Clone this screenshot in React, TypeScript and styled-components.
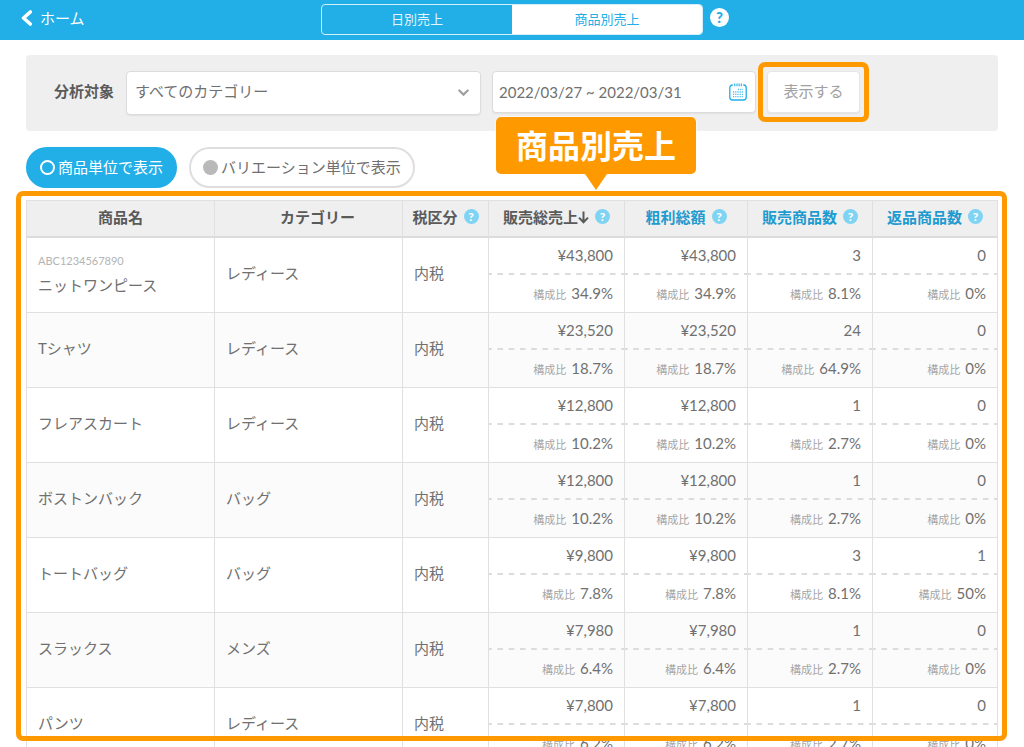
import React from "react";
import styled, { createGlobalStyle, css } from "styled-components";

const blue = "#22aee6";
const linkBlue = "#1f9bd0";
const orange = "#ff9900";
const line = "#e0e0e0";

const GlobalStyle = createGlobalStyle`
  *, *::before, *::after { box-sizing: border-box; }
  body {
    margin: 0;
    background: #fff;
    color: #707070;
    font-family: Lato, "Noto Sans CJK JP", sans-serif;
    font-size: 15px;
    line-height: 20px;
  }
  button, input, select { font: inherit; color: inherit; margin: 0; }
  button { cursor: pointer; }
`;

const Page = styled.div`
  display: flex;
  flex-direction: column;
  height: 100vh;
  overflow: hidden;
`;

const TopBar = styled.header`
  display: grid;
  grid-template-columns: 1fr minmax(0, 382px) 1fr;
  flex: none;
  height: 40px;
  padding: 4px 20px 0;
  background: ${blue};
`;

const BackLink = styled.a`
  display: flex;
  align-items: center;
  justify-self: start;
  gap: 8px;
  height: 28px;
  color: #fff;
  text-decoration: none;
`;

const Tabs = styled.nav`
  display: flex;
  height: 31px;
  border: 1px solid #d3effa;
  border-radius: 4px;
  overflow: hidden;
`;

const Tab = styled.button<{ $active?: boolean }>`
  flex: 1;
  padding: 0 0 2px;
  border: 0;
  font-size: 13px;
  background: ${(p) => (p.$active ? "#fff" : "transparent")};
  color: ${(p) => (p.$active ? blue : "#e4f5fc")};
`;

const Help = styled.button<{ $large?: boolean }>`
  display: inline-flex;
  flex: none;
  align-items: center;
  justify-content: center;
  width: 15px;
  height: 15px;
  padding: 0;
  border: 0;
  border-radius: 50%;
  background: #7fd3f3;
  color: #fff;
  font-size: 12px;
  font-weight: 900;
  line-height: 15px;
  ${(p) =>
    p.$large &&
    css`
      width: 19px;
      height: 19px;
      margin: 4px 0 0 7px;
      background: #fff;
      color: ${blue};
      font-size: 15px;
      line-height: 19px;
    `}
`;

const FilterPanel = styled.form`
  display: flex;
  flex: none;
  align-items: flex-start;
  height: 76px;
  margin: 15px 26px 0;
  padding: 16px 28px;
  border-radius: 4px;
  background: #efefef;
`;

const FilterLabel = styled.label`
  flex: none;
  width: 72px;
  line-height: 40px;
  font-weight: 700;
  color: #5a5a5a;
`;

const SelectBox = styled.div`
  display: grid;
  flex: 0 1 355px;
  align-items: center;
  > * { grid-area: 1 / 1; }
  > svg { justify-self: end; margin-right: 12px; pointer-events: none; }
`;

const field = css`
  border: 1px solid #dcdcdc;
  border-radius: 4px;
  background: #fff;
  box-shadow: 0 1px 1px #e2e2e2;
`;

const Select = styled.select`
  ${field}
  width: 100%;
  height: 44px;
  padding: 0 32px 4px 8px;
  appearance: none;
`;

const DateBox = styled.div`
  ${field}
  display: flex;
  flex: 0 1 264px;
  align-items: center;
  height: 42px;
  margin-left: 11px;
  padding: 0 8px 0 6px;
`;

const DateInput = styled.input`
  flex: 1;
  min-width: 0;
  padding: 0;
  border: 0;
  background: transparent;
  outline: 0;
`;

const Highlight = styled.div`
  position: relative;
  margin-left: 11px;
  &::after {
    content: "";
    position: absolute;
    inset: -9px;
    border: 5px solid ${orange};
    border-radius: 7px;
    pointer-events: none;
  }
`;

const ShowButton = styled.button`
  ${field}
  width: 93px;
  height: 42px;
  padding: 0 0 2px;
  border-color: #e6e6e6;
  color: #a0a0a0;
`;

const UnitSwitch = styled.div`
  display: flex;
  flex: none;
  gap: 12px;
  height: 41px;
  margin: 16px 26px 0;
`;

const Pill = styled.label<{ $active?: boolean }>`
  display: flex;
  align-items: center;
  gap: 3px;
  padding: 0 12px 2px;
  border: 2px solid ${(p) => (p.$active ? blue : "#dedede")};
  border-radius: 21px;
  background: ${(p) => (p.$active ? blue : "#fff")};
  color: ${(p) => (p.$active ? "#fff" : "#707070")};
`;

const Radio = styled.input`
  width: 15px;
  height: 15px;
  margin: 2px 0 0;
  appearance: none;
  border-radius: 50%;
  background: #b9b9b9;
  &:checked {
    border: 2px solid #fff;
    background: transparent;
  }
`;

const Report = styled.main`
  position: relative;
  flex: 1;
  min-height: 0;
  margin-top: 3px;
`;

const Outline = styled.div`
  position: absolute;
  inset: 0 17px 6px 16px;
  border: 5px solid ${orange};
  border-radius: 7px;
  pointer-events: none;
`;

const Callout = styled.div`
  position: absolute;
  bottom: calc(100% + 17px);
  left: 496px;
  width: 200px;
  border-radius: 5px;
  background: ${orange};
  box-shadow: 0 0 0 1px #fff8;
  color: #fff;
  font-size: 32px;
  font-weight: 700;
  line-height: 57px;
  text-align: center;
  &::after {
    content: "";
    position: absolute;
    top: 100%;
    left: 50%;
    margin-left: -11px;
    border: 11px solid transparent;
    border-top: 16px solid ${orange};
    border-bottom: 0;
  }
`;

const TableClip = styled.div`
  height: 100%;
  padding: 9px 26px 0;
  overflow: hidden;
`;

const Table = styled.table`
  width: 100%;
  table-layout: fixed;
  border-spacing: 0;
  border: solid ${line};
  border-width: 1px 0 0 1px;
`;

const Th = styled.th<{ $link?: boolean; $indent?: boolean }>`
  height: 37px;
  padding: 0 0 4px ${(p) => (p.$indent ? "18px" : "0")};
  border-right: 1px solid ${line};
  border-bottom: 2px solid #dcdcdc;
  background: #efefef;
  color: ${(p) => (p.$link ? linkBlue : "#5a5a5a")};
  font-weight: 700;
`;

const HeadContent = styled.div`
  display: flex;
  align-items: center;
  justify-content: center;
  gap: 6px;
`;

const SortButton = styled.button`
  display: flex;
  align-items: center;
  padding: 0;
  border: 0;
  background: none;
  font-weight: 700;
`;

const Row = styled.tr`
  height: 75px;
  &:nth-child(even) { background: #fbfbfb; }
`;

const Td = styled.td`
  padding: 0 11px 4px;
  border-right: 1px solid ${line};
  border-bottom: 1px solid ${line};
`;

const Code = styled.div`
  margin-bottom: 4px;
  color: #b4b4b4;
  font-size: 11px;
`;

const MetricCell = styled(Td)`
  padding: 0;
  text-align: right;
`;

const Metric = styled.div`
  height: 37px;
  padding: 0 11px;
  line-height: 36px;
  white-space: nowrap;
`;

const Divided = styled(Metric)`
  line-height: 34px;
  background: linear-gradient(90deg, #dcdcdc 3px, transparent 3px 8px, #dcdcdc 8px) 0 100% / 11px 2px;
  background-repeat: round no-repeat;
`;

const Ratio = styled.small`
  margin-right: 5px;
  color: #a6a6a6;
  font-size: 11px;
`;

const BackIcon = () => (
  <svg width="12" height="16" viewBox="0 0 12 16" fill="none" stroke="#fff" strokeWidth="3.6" aria-hidden="true">
    <path d="M10.3 2 3.5 8l6.8 6" strokeLinejoin="round" strokeLinecap="round" />
  </svg>
);

const ChevronIcon = () => (
  <svg width="11" height="8" viewBox="0 0 11 8" fill="none" stroke="#a0a0a0" strokeWidth="2.2" aria-hidden="true">
    <path d="M1.3 1.5 5.5 5.6l4.2-4.1" strokeLinecap="round" />
  </svg>
);

const SortArrow = () => (
  <svg width="11" height="15" viewBox="0 0 11 15" fill="none" stroke="#5a5a5a" strokeWidth="2" aria-hidden="true">
    <path d="M5.5 2.5v10.5M1 8.6l4.5 4.6L10 8.6" />
  </svg>
);

const CalendarIcon = () => (
  <svg width="18" height="18" viewBox="0 0 18 18" fill="none" stroke={blue} aria-hidden="true">
    <path
      d="M3.8 2H3.5A2.7 2.7 0 0 0 .8 4.7v9.6A2.7 2.7 0 0 0 3.5 17h11a2.7 2.7 0 0 0 2.7-2.7V4.7A2.7 2.7 0 0 0 14.5 2h-.3"
      strokeWidth="1.3"
    />
    <path d="M5.8 .5v2.7M8 .5v2.7M10.1 .5v2.7M12.3 .5v2.7" strokeWidth="1.1" />
    <path d="M9 6.5h5M4 9h10M4 11.3h10M4 13.6h10" strokeWidth="1.3" strokeDasharray="1.2 1" opacity=".8" />
  </svg>
);

const columns: { label: string; width?: number; link?: boolean; help?: boolean; sorted?: boolean; indent?: boolean }[] = [
  { label: "商品名" },
  { label: "カテゴリー", indent: true },
  { label: "税区分", width: 86, help: true },
  { label: "販売総売上", width: 136, help: true, sorted: true },
  { label: "粗利総額", width: 123, help: true, link: true },
  { label: "販売商品数", width: 125, help: true, link: true },
  { label: "返品商品数", width: 125, help: true, link: true },
];

type Pair = [string, string];
const items: { code?: string; name: string; category: string; metrics: Pair[] }[] = [
  { code: "ABC1234567890", name: "ニットワンピース", category: "レディース", metrics: [["¥43,800", "34.9%"], ["¥43,800", "34.9%"], ["3", "8.1%"], ["0", "0%"]] },
  { name: "Tシャツ", category: "レディース", metrics: [["¥23,520", "18.7%"], ["¥23,520", "18.7%"], ["24", "64.9%"], ["0", "0%"]] },
  { name: "フレアスカート", category: "レディース", metrics: [["¥12,800", "10.2%"], ["¥12,800", "10.2%"], ["1", "2.7%"], ["0", "0%"]] },
  { name: "ボストンバック", category: "バッグ", metrics: [["¥12,800", "10.2%"], ["¥12,800", "10.2%"], ["1", "2.7%"], ["0", "0%"]] },
  { name: "トートバッグ", category: "バッグ", metrics: [["¥9,800", "7.8%"], ["¥9,800", "7.8%"], ["3", "8.1%"], ["1", "50%"]] },
  { name: "スラックス", category: "メンズ", metrics: [["¥7,980", "6.4%"], ["¥7,980", "6.4%"], ["1", "2.7%"], ["0", "0%"]] },
  { name: "パンツ", category: "レディース", metrics: [["¥7,800", "6.2%"], ["¥7,800", "6.2%"], ["1", "2.7%"], ["0", "0%"]] },
];

export default function App() {
  return (
    <Page>
      <GlobalStyle />
      <TopBar>
        <BackLink href="#home">
          <BackIcon />
          ホーム
        </BackLink>
        <Tabs>
          <Tab type="button">日別売上</Tab>
          <Tab type="button" $active>商品別売上</Tab>
        </Tabs>
        <Help type="button" $large>?</Help>
      </TopBar>

      <FilterPanel onSubmit={(e) => e.preventDefault()}>
        <FilterLabel htmlFor="category">分析対象</FilterLabel>
        <SelectBox>
          <Select id="category">
            <option>すべてのカテゴリー</option>
          </Select>
          <ChevronIcon />
        </SelectBox>
        <DateBox>
          <DateInput type="text" aria-label="期間" defaultValue="2022/03/27 ~ 2022/03/31" />
          <CalendarIcon />
        </DateBox>
        <Highlight>
          <ShowButton type="submit">表示する</ShowButton>
        </Highlight>
      </FilterPanel>

      <UnitSwitch>
        <Pill $active>
          <Radio type="radio" name="unit" defaultChecked />
          商品単位で表示
        </Pill>
        <Pill>
          <Radio type="radio" name="unit" />
          バリエーション単位で表示
        </Pill>
      </UnitSwitch>

      <Report>
        <TableClip>
          <Table>
            <colgroup>
              {columns.map((c) => (
                <col key={c.label} width={c.width} />
              ))}
            </colgroup>
            <thead>
              <tr>
                {columns.map((c) => (
                  <Th key={c.label} scope="col" $link={c.link} $indent={c.indent}>
                    <HeadContent>
                      {c.link || c.sorted ? (
                        <SortButton type="button">
                          {c.label}
                          {c.sorted && <SortArrow />}
                        </SortButton>
                      ) : (
                        c.label
                      )}
                      {c.help && <Help type="button">?</Help>}
                    </HeadContent>
                  </Th>
                ))}
              </tr>
            </thead>
            <tbody>
              {items.map((item) => (
                <Row key={item.name}>
                  <Td>
                    {item.code && <Code>{item.code}</Code>}
                    {item.name}
                  </Td>
                  <Td>{item.category}</Td>
                  <Td>内税</Td>
                  {item.metrics.map(([value, ratio], i) => (
                    <MetricCell key={i}>
                      <Divided>{value}</Divided>
                      <Metric>
                        <Ratio>構成比</Ratio>
                        {ratio}
                      </Metric>
                    </MetricCell>
                  ))}
                </Row>
              ))}
            </tbody>
          </Table>
        </TableClip>
        <Outline />
        <Callout>商品別売上</Callout>
      </Report>
    </Page>
  );
}
